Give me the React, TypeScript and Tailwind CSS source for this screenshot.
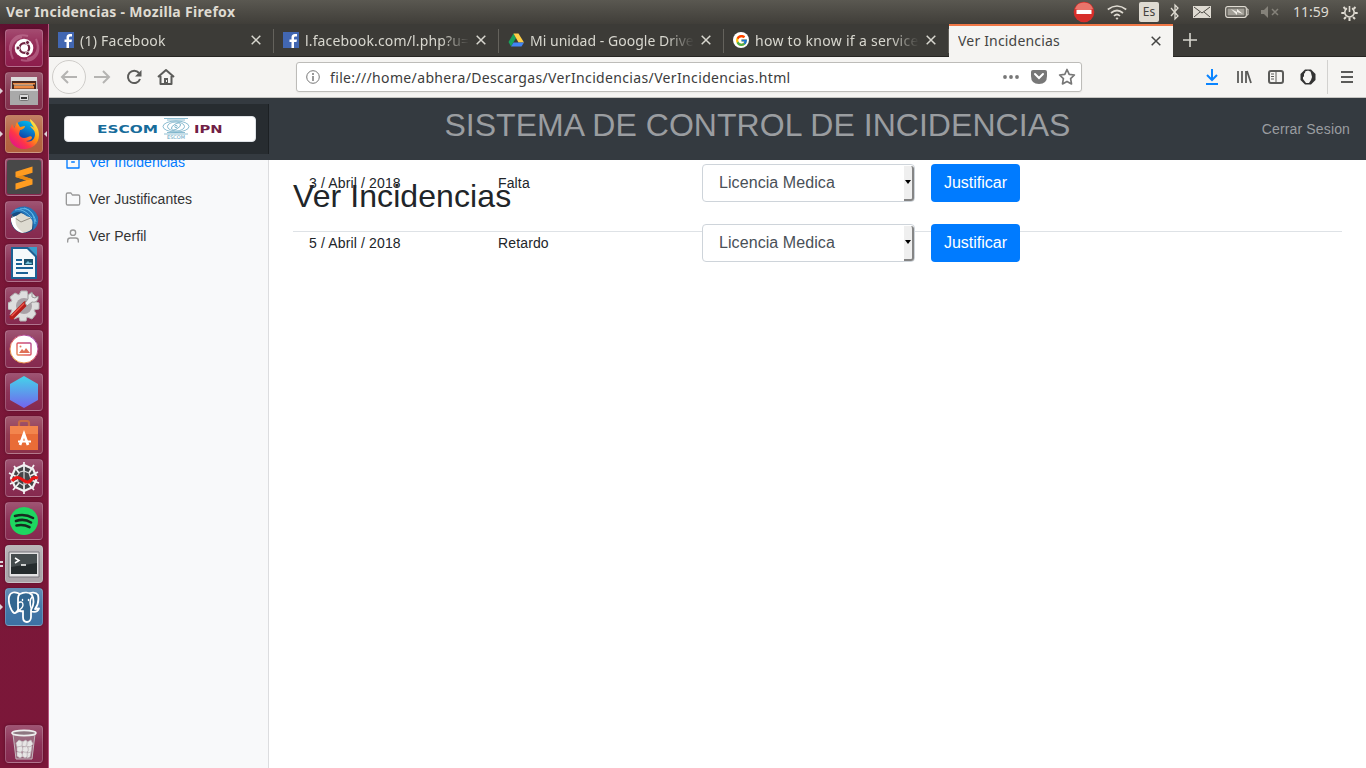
import React from "react";
import { FiArchive, FiFolder, FiUser } from "react-icons/fi";
import { FcGoogle } from "react-icons/fc";

const ui = "font-['Noto_Sans',sans-serif]";

function Tile({ children, bg = "bg-[#86294f]", left, right }: { children: React.ReactNode; bg?: string; left?: boolean; right?: boolean }) {
  return (
    <div className="relative flex h-[38px] w-full shrink-0 items-center justify-center pr-px">
      {left && <i className="absolute left-0 top-4 border-y-[3px] border-l-[3px] border-y-transparent border-l-[#ddd3d8]" />}
      {right && <i className="absolute right-px top-4 border-y-[3px] border-r-[3px] border-y-transparent border-r-[#ddd3d8]" />}
      <div className={`flex h-[38px] w-[38px] items-center justify-center rounded-[4px] border border-white/20 bg-linear-to-b from-white/20 via-white/5 to-transparent shadow-[0_0_3px_rgba(50,0,25,0.5)] ${bg}`}>
        {children}
      </div>
    </div>
  );
}

function Svg({ children, size = 32, box = "0 0 32 32" }: { children: React.ReactNode; size?: number; box?: string }) {
  return <svg width={size} height={size} viewBox={box} fill="none" className="shrink-0">{children}</svg>;
}

function Launcher() {
  return (
    <aside className="flex w-[49px] shrink-0 flex-col gap-[5px] border-r border-[#b5577f] bg-linear-to-b from-[#5e0f30] via-[#7a1838] via-3% to-[#7b1739] pt-[5px] pb-[5px]">
      <Tile bg="bg-[#8d1d4c]">
        <Svg>
          <path d="M2 19C1 8 9 1 20 4M30 13c2 11-6 18-17 15M5 27C0 17 4 7 14 5M28 7c4 9 1 18-9 20" stroke="#c77e9d" strokeWidth="2" opacity=".55" />
          <circle cx="16" cy="16" r="9.3" fill="#fff" />
          <circle cx="16.4" cy="16" r="4.800" stroke="#6f2442" strokeWidth="2.200" />
          <g fill="#6f2442" stroke="#fff" strokeWidth=".8"><circle cx="10" cy="16" r="2" /><circle cx="19.500" cy="10.500" r="2" /><circle cx="19.500" cy="21.500" r="2" /></g>
        </Svg>
      </Tile>
      <Tile left bg="bg-[#82304c]">
        <Svg>
          <path d="M3 2h26l1 28H2z" fill="#bbb" /><path d="M3 2h26v4H3z" fill="#ddd" />
          <path d="M4 6h24v8H4z" fill="#4b2a1e" /><path d="M5 8h22v1.5H5zM6 11h20v2.5H6z" fill="#eb8a43" /><path d="M6 9.5h19v1H6z" fill="#fbe1bd" />
          <path d="M2 14h28v16H2z" fill="#a9a9a9" /><path d="M2 14h28v2H2z" fill="#ddd" />
          <rect x="11.5" y="19.5" width="9" height="6" rx="1" fill="#ddd" stroke="#777" /><path d="M13 22h6v2h-6z" fill="#333" />
        </Svg>
      </Tile>
      <Tile left right bg="bg-[#b3603c]">
        <Svg>
          <defs>
            <linearGradient id="fox" x1="28" y1="3" x2="5" y2="28" gradientUnits="userSpaceOnUse"><stop stopColor="#fff44f" /><stop offset=".4" stopColor="#ff980e" /><stop offset=".7" stopColor="#ff3647" /><stop offset="1" stopColor="#e31587" /></linearGradient>
            <linearGradient id="globe" x1="20" y1="3" x2="12" y2="22" gradientUnits="userSpaceOnUse"><stop stopColor="#00b7ed" /><stop offset="1" stopColor="#18309b" /></linearGradient>
          </defs>
          <circle cx="16.5" cy="14" r="11.3" fill="url(#globe)" />
          <path d="M22 1c5 4 9 9 9 16 0 9-7 14-15 14S1 25 1 17c0-5 2-8 3-11l2 4 3-6 3 5 5-1c0 2-3 4-5 4l-1 4c1 4 5 5 9 3 2-1 4-1 4 1-1 2-3 3-6 3 6 2 9-2 9-7 0-4-3-5-5-8 2 0 3 1 4 2-1-3-4-5-4-9z" fill="url(#fox)" />
        </Svg>
      </Tile>
      <Tile>
        <Svg size={34}><rect width="32" height="32" rx="2" fill="#484848" /><path d="m8 11 16-5v6l-10 3 10 3v5L8 28v-6l10-3-10-3z" fill="#ff9c20" /><path d="m8 16 6-1.5L24 18l-6 1z" fill="#e88a12" /></Svg>
      </Tile>
      <Tile>
        <Svg>
          <circle cx="16" cy="16" r="13" fill="#174b80" />
          <path d="M3 15c2 12 11 18 21 10l1-11-12-5z" fill="#dedbd1" /><path d="m4 12 9 6 12-5" stroke="#928d84" /><path d="M3 14c0 8 5 14 13 15-9-5-9-11-8-17z" fill="#fff" />
          <path d="M2 11C7 1 21-1 28 9l2 4c1 7-2 11-5 13 1-6 0-9-3-13-5 0-6-5-11-5-4 0-7 2-9 3z" fill="#2575b9" />
          <path d="M12 5c8-2 14 4 16 13M16 4c8 2 10 8 11 16M7 6c8-2 13 4 17 8" stroke="#60b6e7" strokeWidth="1" />
        </Svg>
      </Tile>
      <Tile>
        <Svg>
          <path d="M3 0h17l9 9v23H3z" fill="#1b6295" /><path d="M20 0h9v9z" fill="#399dcd" /><path d="M5 2h14l8 8v20H5z" fill="#f5f9fb" />
          <path d="M8 13h6M8 17h6M8 21h17M8 26h12" stroke="#1b6295" strokeWidth="2" /><path d="M16 12h9v6h-9z" fill="#1b536e" /><path d="m17 17 3-3 2 2 1-1 1 2z" fill="#79c6df" />
        </Svg>
      </Tile>
      <Tile>
        <Svg>
          <path d="M13 1h6l1 4 4-2 4 4-2 4 5 2v6l-5 1 2 4-4 5-5-2-1 4h-6l-1-4-5 2-4-4 2-5-4-1v-6l4-2-2-4 5-4 4 2z" fill="#dedede" stroke="#b4b4b4" /><circle cx="16" cy="16" r="8" fill="#a9a1a6" />
          <path d="M4 27 17 14" stroke="#b51f1c" strokeWidth="5" strokeLinecap="round" /><path d="M3.5 26 16 13.5" stroke="#ed5a4d" strokeWidth="1.3" />
          <path d="m17 13 3-4V5l4-3v5l3 1 3-2c1 4-2 7-6 6l-5 4z" fill="#e7e7e7" stroke="#999" />
        </Svg>
      </Tile>
      <Tile>
        <Svg>
          <defs><linearGradient id="photo" x1="28" y1="4" x2="5" y2="28" gradientUnits="userSpaceOnUse"><stop stopColor="#9343bd" /><stop offset=".5" stopColor="#dd5260" /><stop offset="1" stopColor="#efb343" /></linearGradient></defs>
          <circle cx="16" cy="16" r="14" fill="#fff" stroke="url(#photo)" /><rect x="9" y="10" width="14" height="12" rx="1" stroke="url(#photo)" strokeWidth="1.4" />
          <path d="m11 20 3-4 2 2 2-3 4 5z" fill="#df7157" /><circle cx="12.5" cy="13.5" r="1" fill="#e37862" />
        </Svg>
      </Tile>
      <Tile>
        <Svg><defs><linearGradient id="hex" x2="0" y2="1"><stop stopColor="#43d5ea" /><stop offset="1" stopColor="#7463ed" /></linearGradient></defs><path d="m16 0 14 8v16l-14 8-14-8V8z" fill="url(#hex)" /></Svg>
      </Tile>
      <Tile bg="bg-[#8b304b]">
        <Svg>
          <path d="M11 9V4q0-2 2-2h6q2 0 2 2v5" stroke="#c96b43" strokeWidth="2.2" /><path d="M2 7h28v24H2z" fill="#e96c37" /><path d="M2 7h28v8H2z" fill="#f3854d" />
          <path d="m12 26 4-11 4 11" stroke="#fff" strokeWidth="2.700" /><path d="M10 22.500h13" stroke="#fff" strokeWidth="2" />
        </Svg>
      </Tile>
      <Tile>
        <Svg>
          <path d="m16 3 9 4 4 9-4 9-9 4-9-4-4-9 4-9z" fill="#454547" stroke="#f2f2f2" strokeWidth="2.200" />
          <path d="M16 0v9M16 23v9M1 11l8 4M23 18l8 3M2 22l8-4M22 14l8-4M5 28l6-7M21 11l5-8M6 4l5 7M20 21l6 7" stroke="#f2f2f2" strokeWidth="1.700" />
          <path d="m16 9 5 2 2 6-3 4-5 2-5-3-1-6 3-4zM16 9v14" stroke="#d5d5d5" strokeWidth="1.200" />
          <path d="M4 19c4-5 7-4 11-1s6 3 9-1c2-2 3-2 6-1" stroke="#ed1715" strokeWidth="3.200" />
        </Svg>
      </Tile>
      <Tile>
        <Svg><circle cx="16" cy="16" r="14" fill="#1ed760" /><path d="M7 11c7-2 13-1 18 2M8 16c6-2 11-1 15 1.5M8.5 20.5c5-1 9-.5 13 1.700" stroke="#162c20" strokeWidth="2.6" strokeLinecap="round" /></Svg>
      </Tile>
      <div className="relative">
        <Tile bg="bg-[#a9a4a8]"><Svg><path d="M1 4h30v25H1z" fill="#e3e2e3" stroke="#77757a" /><path d="M3 6h26v20H3z" fill="#252b2d" /><path d="M3 6h26v9L3 19z" fill="#454c4e" /><path d="m7 10 4 2.5-4 2.5M13 17h5" stroke="#fff" strokeWidth="1.5" /></Svg></Tile>
        <i className="absolute top-[16px] left-0 h-[2px] w-[3px] bg-[#ddd3d8]" /><i className="absolute top-[20px] left-0 h-[2px] w-[3px] bg-[#ddd3d8]" />
      </div>
      <Tile left bg="bg-[#3c71a3]">
        <Svg>
          <g fill="#336791" stroke="#fff" strokeWidth="1.8" strokeLinejoin="round" strokeLinecap="round">
            <path d="M20 3c3-2 8-2 10 1 1 5 0 10-3 14l4-.500c-1 3-4 4-8 3z" />
            <path d="M12 3C7 0 2 1 1 6c-1 6 2 14 5 16 2 1 4-3 5-5z" />
            <path d="M12 3c4-2 9-2 12 1 2 4 2 10-1 15v7c0 3-2 5-4 5-3 0-4-2-4-5v-6c-4 1-5-1-5-4V8c0-2 0-4 2-5z" />
            <path d="M10 12c3-2 5-1 5 2 0 2-2 4-5 6M24 6c-3 3-2 7-1 11M14.500 8.500v1m6-1v1M12 20l-3 1" fill="none" strokeWidth="1.4" />
          </g>
        </Svg>
      </Tile>
      <div className="mt-auto">
        <Tile>
          <Svg>
            <path d="m5 6 3 25h16l3-25z" fill="#a7a0a3" opacity=".45" /><path d="m5 6 3 25h16l3-25" stroke="#c5b8be" />
            <ellipse cx="16" cy="5" rx="12" ry="2.700" fill="#8e7781" stroke="#eee" strokeWidth="1.7" />
            <g fill="#e8e6e6" stroke="#bdb7ba" strokeWidth=".6"><path d="m8 15 3-3 4 2-1 4-5 1zM14 14l4-2 2 3-2 4-4-1zM19 14l4-2 2 4-3 3-4-1zM9 19l5-1 1 4-3 3-3-2zM15 19l4-1 2 4-3 3-4-2zM20 19l4-1-1 6-3 1zM9 24l4 0 2 4-3 2-3-2zM15 24l4 0 1 4-3 2-3-2zM19 25l4-1-1 5-3 1z" /></g>
          </Svg>
        </Tile>
      </div>
    </aside>
  );
}

function Facebook() {
  return <Svg size={16}><rect width="32" height="32" fill="#4267b2" /><path d="M22 32V20h5l1-5h-6v-3c0-2 1-3 3-3h3V4h-4c-5 0-7 3-7 7v4h-4v5h4v12z" fill="#fff" /></Svg>;
}

function Drive() {
  return <Svg size={16}><path d="M11 3 1 20l5 9 10-17z" fill="#18a35d" /><path d="M11 3h10l11 18H21z" fill="#ffcf48" /><path d="m11 21h21l-5 8H6z" fill="#4285f4" /></Svg>;
}

function Close() {
  return <Svg size={12} box="0 0 12 12"><path d="m1.700 1.700 8.600 8.600m0-8.600-8.600 8.600" stroke="currentColor" strokeWidth="1.5" /></Svg>;
}

function Tab({ icon, title, tracking = "", active }: { icon?: React.ReactNode; title: string; tracking?: string; active?: boolean }) {
  return (
    <div className={`relative flex h-[33px] shrink-0 items-center pl-[9px] ${active ? "w-[224px] border-t-2 border-[#f07746] bg-[#f5f4f2] pb-0.5 pr-[11px] text-[#444443]" : "w-[225px] border-b border-[#262522] pr-3 text-[#d8d7cf]"}`}>
      {icon && <span className="mr-[6px] flex w-4 shrink-0 justify-center">{icon}</span>}
      <span className={`min-w-0 flex-1 overflow-hidden whitespace-nowrap text-[14px] leading-5 ${tracking} ${active ? "" : "pt-px [mask-image:linear-gradient(to_right,black_calc(100%-28px),transparent)]"}`}>{title}</span>
      <span className="ml-[6px]"><Close /></span>
      {!active && <i className="absolute top-[5px] right-0 h-6 w-px bg-[#64625c]" />}
    </div>
  );
}

function SystemBar() {
  return (
    <header className="flex h-6 shrink-0 items-center bg-linear-to-b from-[#5a5851] to-[#403e39] pl-[6px] text-[#dfdbd2]">
      <span className="text-[14px] font-bold leading-5 tracking-[0.3px]">Ver Incidencias - Mozilla Firefox</span>
      <div className="ml-auto flex h-6 items-center">
        <span className="mr-3"><Svg size={22} box="0 0 22 22"><circle cx="11" cy="11" r="10.3" fill="#d72e2a" /><path d="M2 8a9.5 9.5 0 0 1 18 0q-9 4-18 0" fill="#e9756b" /><path d="M3.500 9h15v4h-15z" fill="#fff" /></Svg></span>
        <span className="mr-3"><Svg size={20} box="0 0 20 20"><path d="M.8 7.500q9.200-7 18.400 0M4 11q6-5 12 0M7 14q3-3 6 0" stroke="currentColor" strokeWidth="1.700" /><path d="m8.500 16 1.500 2 1.500-2q-1.500-1-3 0" fill="currentColor" /></Svg></span>
        <span className="mr-[11px] flex h-5 w-5 items-center justify-center rounded-[2px] bg-[#dfdbd2] text-[12px] text-[#43423d]">Es</span>
        <span className="mr-[13px]"><svg width="10" height="18" viewBox="0 0 10 18" fill="none"><path d="m1 5 7 8-3 3V2l3 3-7 8" stroke="currentColor" strokeWidth="1.300" /></svg></span>
        <span className="mr-[14px]"><svg width="18" height="12" viewBox="0 0 18 12"><path fill="currentColor" d="M0 0h18v12H0z" /><path d="m1 1 8 6 8-6M1 11l6-5m4 0 6 5" stroke="#4c4a44" fill="none" /></svg></span>
        <span className="mr-3"><svg width="24" height="12" viewBox="0 0 24 12" fill="none"><rect x=".7" y=".7" width="20.600" height="10.600" rx="2" stroke="currentColor" strokeWidth="1.200" /><path d="M2.500 2.500h17v7h-17z" fill="#a19e96" /><path d="m6 3 6 3V3l6 5-6-2v3z" fill="#f1eee8" /><path d="M22 3h1v6h-1" stroke="currentColor" /></svg></span>
        <span className="mr-[14px] text-[#85827a]"><svg width="18" height="12" viewBox="0 0 18 12"><path d="M0 4h3l4-4v12L3 8H0z" fill="currentColor" /><path d="m11 3 6 6m0-6-6 6" stroke="currentColor" strokeWidth="1.500" /></svg></span>
        <span className="mr-[11px] w-[37px] whitespace-nowrap text-[14px] leading-5 pb-px">11:59</span>
        <span className="mr-2"><Svg size={17} box="0 0 17 17"><path d="M8.500 2v6M6 4.300a4.700 4.700 0 1 0 5 0" stroke="currentColor" strokeWidth="1.600" /><path d="M8.500 13.500V17M.3 9h3m10.400 0h3M2.500 3l2 2m8 0 2-2M3 15l2-2m7 0 2 2" stroke="currentColor" strokeWidth="2" /></Svg></span>
      </div>
    </header>
  );
}

function Toolbar() {
  return (
    <div className="flex h-[41px] shrink-0 items-center border-b border-[#c5c4c1] bg-[#f5f4f2] pl-[3px] text-[#5b5b59]">
      <div className="flex w-[244px] shrink-0 items-center">
        <span className="flex h-[34px] w-[34px] items-center justify-center rounded-full border border-[#cfcdca] bg-[#f8f7f5] text-[#b5b4b2]"><Svg size={18} box="0 0 18 18"><path d="M17 9H2m6-6L2 9l6 6" stroke="currentColor" strokeWidth="2" /></Svg></span>
        <span className="ml-[7px] text-[#b5b4b2]"><Svg size={18} box="0 0 18 18"><path d="M1 9h15m-6-6 6 6-6 6" stroke="currentColor" strokeWidth="2" /></Svg></span>
        <span className="ml-[15px]"><Svg size={16} box="0 0 16 16"><path d="M13 4A6.200 6.200 0 1 0 14 10" stroke="currentColor" strokeWidth="2" /><path d="M15.500 1v6.500H9z" fill="currentColor" /></Svg></span>
        <span className="ml-[15px]"><Svg size={18} box="0 0 18 18"><path d="m1 9 8-7 8 7M3.500 8v8h11V8" stroke="currentColor" strokeWidth="2" strokeLinejoin="round" /><path d="M7 10h4v6H7z" fill="currentColor" /><path d="M9 12h1v2H9z" fill="#f5f4f2" /></Svg></span>
      </div>
      <div className="flex h-[30px] w-[786px] shrink-0 items-center rounded-[3px] border border-[#bdbcb9] bg-white pl-[9px] pr-[5px] shadow-xs">
        <Svg size={14} box="0 0 14 14"><circle cx="7" cy="7" r="6.300" stroke="#777" /><path d="M7 6v5M7 3v2" stroke="#777" strokeWidth="1.500" /></Svg>
        <span className="ml-[10px] whitespace-nowrap pt-px text-[14px] leading-5 tracking-[0.35px] text-[#3c3c3c]">file:///home/abhera/Descargas/VerIncidencias/VerIncidencias.html</span>
        <div className="ml-auto flex items-center text-[#777]">
          <Svg size={18} box="0 0 18 18"><g fill="currentColor"><circle cx="3" cy="9" r="1.900" /><circle cx="9" cy="9" r="1.900" /><circle cx="15" cy="9" r="1.900" /></g></Svg>
          <span className="mx-[11px]"><Svg size={16} box="0 0 16 16"><path d="M2 1h12q2 0 2 2v4q0 8-8 8T0 7V3q0-2 2-2" fill="currentColor" /><path d="m4 5 4 4 4-4" stroke="#fff" strokeWidth="2" strokeLinecap="round" /></Svg></span>
          <Svg size={18} box="0 0 18 18"><path d="m9 1.500 2.200 4.800 5.200.7-3.800 3.700.9 5.200L9 13.400l-4.500 2.500.9-5.200L1.600 7l5.200-.7z" stroke="currentColor" strokeWidth="1.700" strokeLinejoin="round" /></Svg>
        </div>
      </div>
      <div className="ml-auto flex items-center">
        <span className="mr-[16px] text-[#0a84ff]"><Svg size={16} box="0 0 16 16"><path d="M8 0v11M3 6l5 5 5-5M2 15h12" stroke="currentColor" strokeWidth="2" /></Svg></span>
        <span className="mr-4"><Svg size={16} box="0 0 16 16"><path d="M2 2v12M6 2v12M10 2v12M11 2l4 12" stroke="currentColor" strokeWidth="1.800" /></Svg></span>
        <span className="mr-4"><Svg size={16} box="0 0 16 16"><rect x="1" y="2" width="14" height="12" rx="2" stroke="currentColor" strokeWidth="2" /><path d="M8 2v12M3 5h3M3 7.500h3M3 10h3" stroke="currentColor" /></Svg></span>
        <span className="mr-[11px]"><Svg size={16} box="0 0 16 16"><path d="M5 .5h6L15.500 5v6L11 15.500H5L.5 11V5z" fill="#333" /><path d="M4 5c0-1 1-1 1-1 0-2 1-2 2-2q1-1 2 0 2 0 2 2l1 4-1 3-2 3H6l-3-4V8q0-1 1 0z" fill="#f5f4f2" /></Svg></span>
        <i className="mr-[13px] h-[34px] w-px bg-[#d2d1cf]" />
        <span className="mr-[13px]"><Svg size={12} box="0 0 12 12"><path d="M0 1h12M0 6h12M0 11h12" stroke="currentColor" strokeWidth="1.800" /></Svg></span>
      </div>
    </div>
  );
}

function Brand() {
  return (
    <div className="flex h-[50px] w-[220px] shrink-0 items-center border-r border-[#1c2023] bg-[#272c30] pl-[15px]">
      <div className="flex h-[26px] w-48 items-center justify-center rounded-[4px] border border-[#dee2e6] bg-white">
        <svg width="126" height="22" viewBox="0 0 126 22" fill="none">
          <text x="0" y="15" fill="#176c9b" fontFamily="DejaVu Sans" fontWeight="700" fontSize="11" textLength="61" lengthAdjust="spacingAndGlyphs">ESCOM</text>
          <g stroke="#5ca1bd" strokeWidth=".7"><ellipse cx="79" cy="8.500" rx="13" ry="5.500" /><ellipse cx="79" cy="8.500" rx="8.500" ry="4.500" /><ellipse cx="79" cy="8.500" rx="5" ry="2.500" transform="rotate(-30 79 8.500)" /><circle cx="79" cy="8.500" r="1.200" /><path d="M67 .5h24M70 2h18M70 14.500h18M67 16h24" /></g>
          <text x="70" y="21" fill="#5ca1bd" fontFamily="DejaVu Sans" fontSize="5" textLength="18">ESCOM</text>
          <text x="97" y="15" fill="#702045" fontFamily="DejaVu Sans" fontWeight="700" fontSize="11" textLength="28.500" lengthAdjust="spacingAndGlyphs">IPN</text>
        </svg>
      </div>
    </div>
  );
}

function Row({ date, type }: { date: string; type: string }) {
  return (
    <div className="flex h-[60px] items-start pt-1">
      <span className="w-[189px] leading-[38px] tracking-[0.14px]">{date}</span>
      <span className="w-[204px] leading-[38px] tracking-[0.14px]">{type}</span>
      <div className="mr-4 flex h-[38px] w-[213px] items-center rounded-[4px] border border-[#ced4da] bg-white pl-4 text-base text-[#495057]">
        <span className="flex-1 tracking-[0.08px]">Licencia Medica</span>
        <span className="flex h-[35px] w-[10px] items-center justify-center rounded-r-[3px] border-r-2 border-b-2 border-[#858585] bg-[#efefef]"><svg width="6" height="4" viewBox="0 0 6 4"><path d="M0 0h6L3 4z" fill="#000" /></svg></span>
      </div>
      <button className="h-[38px] w-[89px] rounded-[4px] bg-[#007bff] text-base text-white">Justificar</button>
    </div>
  );
}

export default function App() {
  return (
    <div className={`flex h-[768px] w-[1366px] flex-col overflow-hidden ${ui}`}>
      <SystemBar />
      <div className="flex min-h-0 flex-1">
        <Launcher />
        <main className="flex min-w-0 flex-1 flex-col">
          <div className="flex h-[33px] shrink-0 bg-[#3c3b37]">
            <Tab icon={<Facebook />} title="(1) Facebook" tracking="tracking-[0.25px]" />
            <Tab icon={<Facebook />} title="l.facebook.com/l.php?u=" tracking="tracking-[0.14px]" />
            <Tab icon={<Drive />} title="Mi unidad - Google Drive" tracking="tracking-[0.02px]" />
            <Tab icon={<span className="flex h-4 w-4 items-center justify-center rounded-full bg-white"><FcGoogle size={13} /></span>} title="how to know if a service" tracking="tracking-[0.28px]" />
            <Tab title="Ver Incidencias" active tracking="tracking-[0.18px]" />
            <span className="flex flex-1 items-center border-b border-[#262522] pl-[10px] text-[#d8d7cf]"><Svg size={14} box="0 0 14 14"><path d="M7 0v14M0 7h14" stroke="currentColor" strokeWidth="1.600" /></Svg></span>
          </div>
          <Toolbar />
          <div className="flex min-h-0 flex-1 flex-col bg-white font-['Liberation_Sans',Arial,sans-serif] text-[14px] text-[#212529]">
            <nav className="z-10 flex h-[62px] shrink-0 items-center bg-[#343a40] text-[#9a9da0]">
              <Brand />
              <h1 className="flex-1 pb-[9px] pr-[16px] text-center text-[32px] leading-[38px] tracking-[0.04px] whitespace-nowrap">SISTEMA DE CONTROL DE INCIDENCIAS</h1>
              <span className="mr-4 tracking-[0.14px]">Cerrar Sesion</span>
            </nav>
            <div className="flex min-h-0 flex-1">
              <aside className="-mt-4 flex w-[220px] shrink-0 flex-col border-r border-[#dcdddf] bg-[#f8f9fa] pl-4 tracking-[0.07px] text-[#333]">
                <div className="flex h-[37px] items-center gap-2 text-[#007bff]"><FiArchive size={16} className="-mt-px" />Ver Incidencias</div>
                <div className="flex h-[37px] items-center gap-2"><FiFolder size={16} className="-mt-px text-[#999]" />Ver Justificantes</div>
                <div className="flex h-[37px] items-center gap-2"><FiUser size={16} className="-mt-px text-[#999]" />Ver Perfil</div>
              </aside>
              <section className="grid flex-1 content-start px-6">
                <h2 className="h-[72px] border-b border-[#dee2e6] pt-[17px] text-[32px] leading-[38px] tracking-[0.08px] [grid-area:1/1]">Ver Incidencias</h2>
                <div className="z-[1] pl-4 [grid-area:1/1]">
                  <Row date="3 / Abril / 2018" type="Falta" />
                  <Row date="5 / Abril / 2018" type="Retardo" />
                </div>
              </section>
            </div>
          </div>
        </main>
      </div>
    </div>
  );
}
